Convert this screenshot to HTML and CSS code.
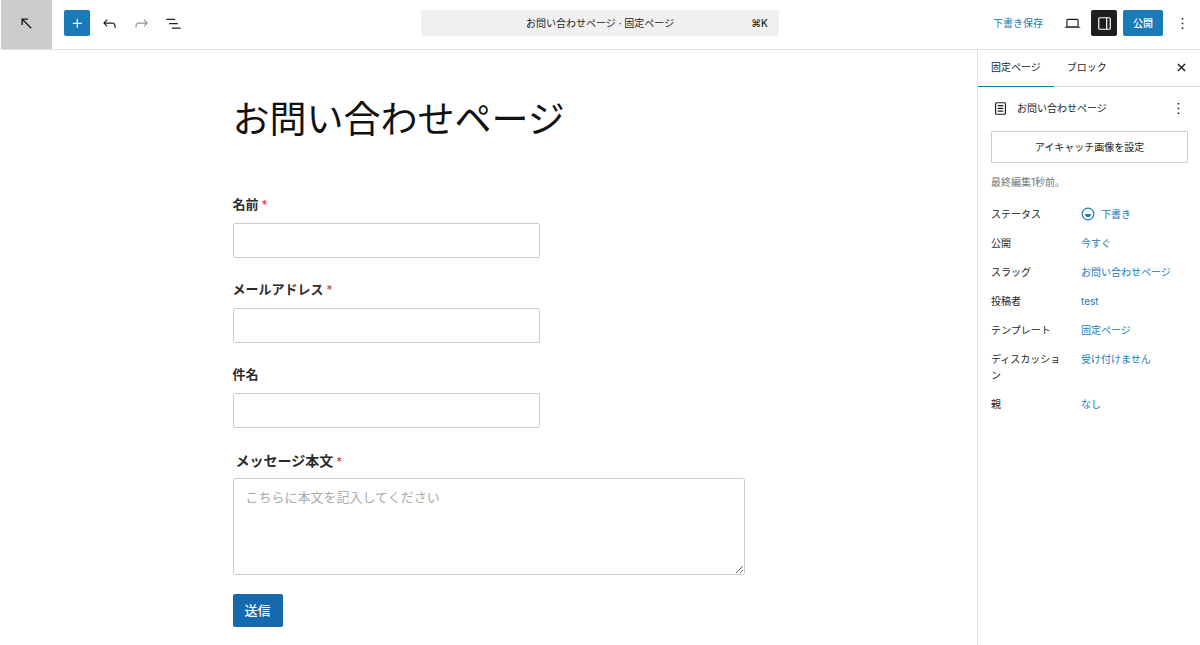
FILE: index.html
```html
<!DOCTYPE html>
<html lang="ja">
<head>
  <meta charset="UTF-8">
  <meta name="viewport" content="width=device-width, initial-scale=1.0">
  <title>お問い合わせページ · 固定ページ</title>
  <link rel="stylesheet" href="styles.css">
</head>
<body>
  <header class="toolbar">
    <div class="toolbar-left">
      <a class="back-link" href="#" aria-label="戻る">
        <svg class="icon" viewBox="0 0 24 24"><path d="M6.5 14V6.5H14M7 7l11 11" fill="none" stroke="currentColor" stroke-width="1.8"/></svg>
      </a>
      <div class="tools">
        <button class="icon-button primary" aria-label="ブロックを追加">
          <svg class="icon" viewBox="0 0 24 24"><path d="M11 12.5V17.5H12.5V12.5H17.5V11H12.5V6H11V11H6V12.5H11Z"/></svg>
        </button>
        <button class="icon-button" aria-label="元に戻す">
          <svg class="icon" viewBox="0 0 24 24"><path d="M18.3 11.7c-.6-.6-1.4-.9-2.3-.9H6.7l2.9-3.3-1.1-1-4.5 5L8.5 16l1-1-2.7-2.7H16c.5 0 .9.2 1.3.5 1 1 1 3.4 1 4.5v.3h1.5v-.2c0-1.5 0-4.3-1.5-5.7z"/></svg>
        </button>
        <button class="icon-button muted" aria-label="やり直す">
          <svg class="icon" viewBox="0 0 24 24"><path d="M15.6 6.5l-1.1 1 2.9 3.3H8c-.9 0-1.7.3-2.3.9-1.4 1.5-1.4 4.2-1.4 5.6v.2h1.5v-.3c0-1.1 0-3.5 1-4.5.3-.3.7-.5 1.3-.5h9.2L14.5 15l1.1 1.1 4.6-4.6-4.6-5z"/></svg>
        </button>
        <button class="icon-button" aria-label="リスト表示">
          <svg class="icon" viewBox="0 0 24 24"><path d="M3 6h11v1.5H3V6Zm3.5 5.5h11V13h-11v-1.5ZM21 17H10v1.5h11V17Z"/></svg>
        </button>
      </div>
    </div>
    <button class="command-bar">
      <span class="command-title">お問い合わせページ · 固定ページ</span>
      <span class="command-key">⌘K</span>
    </button>
    <div class="toolbar-right">
      <button class="save-draft">下書き保存</button>
      <button class="icon-button" aria-label="表示">
        <svg class="icon" viewBox="0 0 24 24"><path d="M20.5 16h-.7V8c0-1.1-.9-2-2-2H6.2c-1.1 0-2 .9-2 2v8h-.7c-.8 0-1.5.7-1.5 1.5h20c0-.8-.7-1.5-1.5-1.5zM5.7 8c0-.3.2-.5.5-.5h11.6c.3 0 .5.2.5.5v7.6H5.7V8z"/></svg>
      </button>
      <button class="icon-button dark" aria-label="設定">
        <svg class="icon" viewBox="0 0 24 24"><path d="M18 4H6c-1.1 0-2 .9-2 2v12c0 1.1.9 2 2 2h12c1.1 0 2-.9 2-2V6c0-1.1-.9-2-2-2zm-4 14.5H6c-.3 0-.5-.2-.5-.5V6c0-.3.2-.5.5-.5h8v13zm4.5-.5c0 .3-.2.5-.5.5h-2.5v-13H18c.3 0 .5.2.5.5v12z"/></svg>
      </button>
      <button class="publish">公開</button>
      <button class="icon-button" aria-label="オプション">
        <svg class="icon" viewBox="0 0 24 24"><path d="M13 19h-2v-2h2v2zm0-6h-2v-2h2v2zm0-6h-2V5h2v2z"/></svg>
      </button>
    </div>
  </header>

  <div class="editor">
    <main class="canvas">
      <div class="content">
        <h1>お問い合わせページ</h1>
        <form class="contact-form">
          <div class="field">
            <label for="name">名前<span class="required">*</span></label>
            <input type="text" id="name">
          </div>
          <div class="field">
            <label for="email">メールアドレス<span class="required">*</span></label>
            <input type="email" id="email">
          </div>
          <div class="field">
            <label for="subject">件名</label>
            <input type="text" id="subject">
          </div>
          <div class="field message">
            <label for="message">メッセージ本文<span class="required">*</span></label>
            <textarea id="message" placeholder="こちらに本文を記入してください"></textarea>
          </div>
          <button type="button" class="submit">送信</button>
        </form>
      </div>
    </main>

    <aside class="sidebar">
      <div class="tabs">
        <button class="tab active">固定ページ</button>
        <button class="tab">ブロック</button>
        <button class="icon-button close" aria-label="閉じる">
          <svg class="icon" viewBox="0 0 24 24"><path d="M7.5 7.5l9 9M16.5 7.5l-9 9" fill="none" stroke="currentColor" stroke-width="1.8"/></svg>
        </button>
      </div>
      <div class="panel">
        <div class="summary">
          <svg class="icon" viewBox="0 0 24 24"><path d="M15.5 7.5h-7V9h7V7.5Zm-7 3.5h7v1.5h-7V11Zm7 3.5h-7V16h7v-1.5Z"/><path d="M17 4H7a2 2 0 0 0-2 2v12a2 2 0 0 0 2 2h10a2 2 0 0 0 2-2V6a2 2 0 0 0-2-2ZM7 5.5h10a.5.5 0 0 1 .5.5v12a.5.5 0 0 1-.5.5H7a.5.5 0 0 1-.5-.5V6a.5.5 0 0 1 .5-.5Z" fill-rule="evenodd"/></svg>
          <h2>お問い合わせページ</h2>
          <button class="icon-button" aria-label="操作">
            <svg class="icon" viewBox="0 0 24 24"><path d="M13 19h-2v-2h2v2zm0-6h-2v-2h2v2zm0-6h-2V5h2v2z"/></svg>
          </button>
        </div>
        <button class="featured-image">アイキャッチ画像を設定</button>
        <p class="last-edited">最終編集1秒前。</p>
        <dl class="details">
          <dt>ステータス</dt>
          <dd>
            <a class="status" href="#">
              <svg class="status-icon" viewBox="0 0 14 14"><circle cx="7" cy="7" r="5.8" fill="none" stroke="currentColor" stroke-width="1.2"/><path d="M4 7h6a3 3 0 0 1-6 0z"/></svg>
              下書き
            </a>
          </dd>
          <dt>公開</dt>
          <dd><a href="#">今すぐ</a></dd>
          <dt>スラッグ</dt>
          <dd><a href="#">お問い合わせページ</a></dd>
          <dt>投稿者</dt>
          <dd><a href="#">test</a></dd>
          <dt>テンプレート</dt>
          <dd><a href="#">固定ページ</a></dd>
          <dt>ディスカッション</dt>
          <dd><a href="#">受け付けません</a></dd>
          <dt>親</dt>
          <dd><a href="#">なし</a></dd>
        </dl>
      </div>
    </aside>
  </div>
</body>
</html>
```
FILE: styles.css
```css
* {
  box-sizing: border-box;
}
body {
  font-family: Inter, "Noto Sans CJK JP", sans-serif;
  font-size: 10px;
  line-height: 16px;
  color: #1e1e1e;
  background-color: #fff;
  margin: 0;
  min-height: 100vh;
  display: flex;
  flex-direction: column;
}
button {
  font: inherit;
  color: inherit;
  background: none;
  border: none;
  padding: 0;
  cursor: pointer;
}
a {
  color: #1a7ab8;
  text-decoration: none;
}
.icon {
  width: 19px;
  height: 19px;
  fill: currentColor;
  flex: none;
}

/* toolbar */
.toolbar {
  display: grid;
  grid-template-columns: 1fr minmax(0, 358px) 1fr;
  align-items: start;
  border-bottom: 1px solid #e0e0e0;
}
.toolbar-left,
.toolbar-right,
.tools {
  display: flex;
  align-items: center;
}
.toolbar-left {
  gap: 12px;
  align-items: flex-start;
}
.back-link {
  width: 52px;
  height: 49px;
  display: flex;
  align-items: center;
  justify-content: center;
  padding-bottom: 3px;
  color: #1e1e1e;
  background-color: #ccc;
  border-left: 1px solid #fff;
}
.tools,
.toolbar-right {
  gap: 6px;
  padding-top: 10px;
}
.toolbar-right {
  justify-content: flex-end;
  padding-right: 5px;
}
.icon-button {
  width: 26px;
  height: 26px;
  display: flex;
  align-items: center;
  justify-content: center;
  border-radius: 2px;
}
.icon-button.primary {
  background-color: #1a7ab8;
  color: #fff;
}
.icon-button.dark {
  background-color: #1e1e1e;
  color: #fff;
}
.icon-button.muted {
  color: #949494;
}
.command-bar {
  height: 26px;
  display: flex;
  align-items: center;
  margin-top: 10px;
  padding: 0 11px;
  background-color: #f0f0f0;
  border-radius: 3px;
}
.command-title {
  flex: 1;
  padding-left: 17px;
}
.command-key {
  font-weight: 500;
}
.save-draft {
  padding: 0 10px;
  color: #1a7ab8;
}
.publish {
  height: 26px;
  padding: 0 10px;
  background-color: #1a7ab8;
  color: #fff;
  font-weight: 500;
  border-radius: 2px;
}

.editor {
  flex: 1;
  display: flex;
}

/* page content */
.canvas {
  flex: 1;
  padding: 45px 24px 18px;
}
.content {
  max-width: 512px;
  margin: 0 auto;
}
h1 {
  margin: 0 0 49px;
  font-size: 37px;
  font-weight: 400;
  line-height: 50px;
  color: #111;
}
.field {
  display: flex;
  flex-direction: column;
  gap: 9px;
  margin-bottom: 21px;
}
.field label {
  font-size: 13px;
  font-weight: 700;
  line-height: 20px;
  color: #2c2c2c;
}
.required {
  margin-left: 3px;
  color: #d63638;
  font-size: 12px;
  font-weight: 400;
  line-height: 1;
}
.field input {
  width: 60%;
  height: 35px;
  padding: 0 12px;
  border: 1px solid #ccc;
  border-radius: 2px;
  font: inherit;
  font-size: 13px;
}
.message {
  gap: 7px;
  margin: 23px 0 19px;
}
.message label {
  padding-left: 3px;
  font-size: 14px;
}
.message textarea {
  width: 100%;
  height: 97px;
  padding: 8px 12px;
  border: 1px solid #ccc;
  border-radius: 2px;
  font: inherit;
  font-size: 13px;
  line-height: 20px;
}
.message textarea::placeholder {
  color: #aaa;
}
.submit {
  height: 33px;
  padding: 0 12px 2px;
  background-color: #1669aa;
  color: #fff;
  font-size: 13px;
  font-weight: 500;
  border-radius: 2px;
}

/* settings sidebar */
.sidebar {
  width: 223px;
  flex: none;
  border-left: 1px solid #e0e0e0;
}
.tabs {
  display: flex;
  align-items: center;
  height: 37px;
  padding-right: 6px;
  border-bottom: 1px solid #ddd;
}
.tab {
  height: 37px;
  padding: 0 13px 2px;
  border-bottom: 1px solid transparent;
}
.tab.active {
  border-bottom-color: #1a7ab8;
}
.close {
  margin-left: auto;
  padding-bottom: 2px;
}
.panel {
  padding: 8px 12px 8px 13px;
}
.summary {
  display: flex;
  align-items: center;
  gap: 7px;
  margin-bottom: 10px;
}
.summary h2 {
  flex: 1;
  margin: 0;
  font-size: 10px;
  font-weight: 400;
}
.summary .icon-button {
  margin-right: -3px;
}
.featured-image {
  width: 100%;
  height: 32px;
  border: 1px solid #ccc;
  border-radius: 1px;
}
.last-edited {
  margin: 11px 0 16px;
  color: #757575;
}
.details {
  display: grid;
  grid-template-columns: 77px 1fr;
  gap: 13px;
  margin: 0;
}
.details dd {
  margin: 0;
}
.status {
  display: flex;
  align-items: center;
  gap: 6px;
}
.status-icon {
  width: 14px;
  height: 14px;
  fill: currentColor;
}
```
